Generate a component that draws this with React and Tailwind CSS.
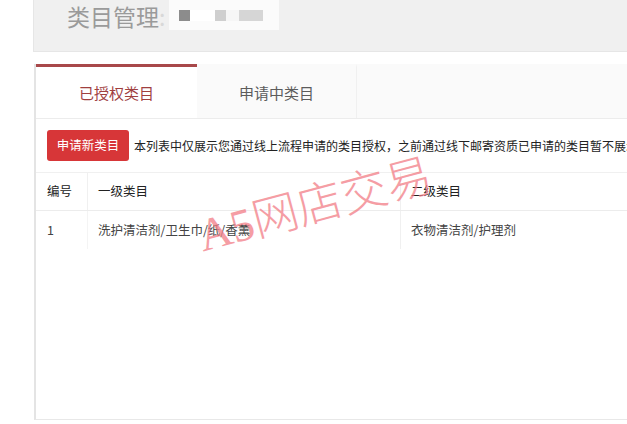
export default function App() {
  const font = { fontFamily: '"Noto Sans CJK SC", "Liberation Sans", sans-serif' };
  return (
    <div
      className="relative w-[627px] h-[424px] overflow-hidden bg-white"
      style={font}
    >
      {/* page header */}
      <div className="ml-[33px] w-[620px] h-[52px] bg-[#f0f0f0] border-l border-b border-[#e6e6e6] flex items-start pl-[33px] pt-0">
        <span className="text-[23px] leading-[32px] text-[#9a9a9a]">类目管理</span>
        <span className="text-[23px] leading-[32px] text-[#d8d8d8]">:</span>
        <div className="ml-[4px] h-[30px] w-[110px] bg-[#fbfbfb] flex items-center pl-[10px]">
          <span className="w-[11px] h-[11px] bg-[#8c8c8c]" />
          <span className="w-[25px] h-[11px] bg-white" />
          <span className="w-[11px] h-[11px] bg-[#cfcfcf]" />
          <span className="w-[13px] h-[11px] bg-[#f6f6f6]" />
          <span className="w-[24px] h-[11px] bg-[#d6d6d6]" />
        </div>
      </div>

      {/* main panel */}
      <div className="ml-[34px] mt-[12px] h-[356px] border-l-2 border-[#e4e4e4] border-b border-b-[#e8e8e8]">
        {/* tabs */}
        <div className="flex h-[55px] border-b border-[#ececec] bg-[#fafafa]">
          <div className="w-[161px] border-t-[3px] border-[#a8484a] bg-white flex items-center justify-center text-[15px] text-[#a0403f] pt-[1px]">
            已授权类目
          </div>
          <div className="w-[160px] border-t-[3px] border-transparent flex items-center justify-center text-[15px] text-[#5c5c5c] border-r border-r-[#f0f0f0] pt-[1px]">
            申请中类目
          </div>
        </div>

        {/* toolbar */}
        <div className="flex items-center h-[54px] pl-[11px] border-b border-[#f0f0f0] whitespace-nowrap">
          <button className="w-[82px] h-[31px] rounded-[3px] bg-[#d73638] text-white text-[12.5px] shrink-0">
            申请新类目
          </button>
          <span className="ml-[5px] text-[12px] text-[#222]">
            本列表中仅展示您通过线上流程申请的类目授权，之前通过线下邮寄资质已申请的类目暂不展示
          </span>
        </div>

        {/* table */}
        <div className="text-[12.5px]">
          <div className="flex h-[38px] items-center border-b border-[#ececec] text-[#222]">
            <div className="w-[52px] pl-[11px] h-full flex items-center border-r border-[#f0f0f0]">编号</div>
            <div className="w-[313px] pl-[10px] h-full flex items-center border-r border-[#f0f0f0]">一级类目</div>
            <div className="pl-[10px]">二级类目</div>
          </div>
          <div className="flex h-[38px] items-center text-[#444]">
            <div className="w-[52px] pl-[11px] h-full flex items-center border-r border-[#f4f4f4]">1</div>
            <div className="w-[313px] pl-[10px] h-full flex items-center border-r border-[#f0f0f0]">
              洗护清洁剂/卫生巾/纸/香薰
            </div>
            <div className="pl-[10px]">衣物清洁剂/护理剂</div>
          </div>
        </div>
      </div>

      {/* watermark */}
      <div
        className="absolute left-[199px] top-[214px] text-[46px] leading-none text-[#f27d86] opacity-75 whitespace-nowrap -rotate-[15deg] origin-left font-light"
        style={{ fontFamily: '"Liberation Serif", "Noto Sans CJK SC", serif' }}
      >
        A5网店交易
      </div>
    </div>
  );
}
